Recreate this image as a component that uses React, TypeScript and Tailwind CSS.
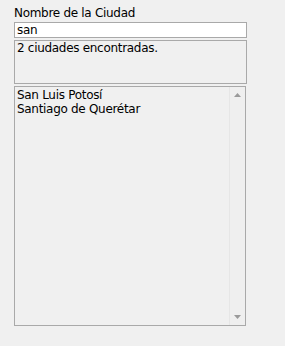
export default function App() {
  const ciudades = ["San Luis Potosí", "Santiago de Querétar"];

  return (
    <div
      className="w-[285px] h-[346px] bg-[#f0f0f0] pl-[14px] pt-[5px] text-[12px] text-black"
      style={{ fontFamily: '"DejaVu Sans", Tahoma, sans-serif' }}
    >
      <div className="h-[17px] leading-[17px] tracking-[-0.3px]">Nombre de la Ciudad</div>
      <div className="w-[233px] h-[16px] border border-[#a9a9a9] bg-white px-[2px] leading-[14px] tracking-[-0.3px]">
        san
      </div>
      <div className="mt-[2px] w-[233px] h-[44px] border border-[#a9a9a9] bg-[#f0f0f0] px-[2px] leading-[15px] tracking-[-0.3px]">
        2 ciudades encontradas.
      </div>
      <div className="mt-[2px] w-[232px] h-[240px] border border-[#a9a9a9] bg-[#f0f0f0] flex">
        <div className="flex-1 px-[2px] pt-[1px] leading-[14px] tracking-[-0.3px]">
          {ciudades.map((c) => (
            <div key={c}>{c}</div>
          ))}
        </div>
        <div className="w-[16px] border-l border-[#e6e6e6] bg-[#efefef] flex flex-col justify-between items-center py-[6px]">
          <svg width="7" height="4" viewBox="0 0 7 4">
            <path d="M3.5 0 L7 4 L0 4 Z" fill="#9a9a9a" />
          </svg>
          <svg width="7" height="4" viewBox="0 0 7 4">
            <path d="M0 0 L7 0 L3.5 4 Z" fill="#9a9a9a" />
          </svg>
        </div>
      </div>
    </div>
  );
}
